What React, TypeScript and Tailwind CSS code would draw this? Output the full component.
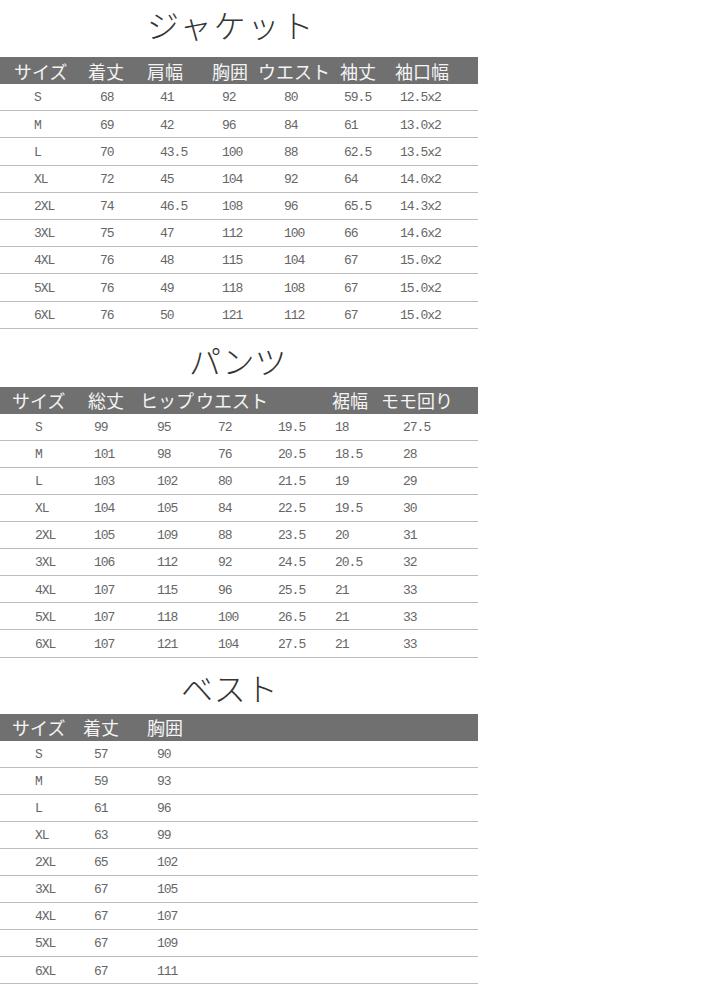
const jp = "font-['Noto_Sans_CJK_JP','Noto_Sans',sans-serif]";
const mono = "font-['Liberation_Mono','DejaVu_Sans_Mono',monospace]";

const sizes = ["S", "M", "L", "XL", "2XL", "3XL", "4XL", "5XL", "6XL"];

const jacketHead = ["サイズ", "着丈", "肩幅", "胸囲", "ウエスト", "袖丈", "袖口幅"];
const jacketRows = [
  ["68", "41", "92", "80", "59.5", "12.5x2"],
  ["69", "42", "96", "84", "61", "13.0x2"],
  ["70", "43.5", "100", "88", "62.5", "13.5x2"],
  ["72", "45", "104", "92", "64", "14.0x2"],
  ["74", "46.5", "108", "96", "65.5", "14.3x2"],
  ["75", "47", "112", "100", "66", "14.6x2"],
  ["76", "48", "115", "104", "67", "15.0x2"],
  ["76", "49", "118", "108", "67", "15.0x2"],
  ["76", "50", "121", "112", "67", "15.0x2"],
];

const pantsHead = ["サイズ", "総丈", "ヒップ", "ウエスト", "裾幅", "モモ回り"];
const pantsRows = [
  ["99", "95", "72", "19.5", "18", "27.5"],
  ["101", "98", "76", "20.5", "18.5", "28"],
  ["103", "102", "80", "21.5", "19", "29"],
  ["104", "105", "84", "22.5", "19.5", "30"],
  ["105", "109", "88", "23.5", "20", "31"],
  ["106", "112", "92", "24.5", "20.5", "32"],
  ["107", "115", "96", "25.5", "21", "33"],
  ["107", "118", "100", "26.5", "21", "33"],
  ["107", "121", "104", "27.5", "21", "33"],
];

const vestHead = ["サイズ", "着丈", "胸囲"];
const vestRows = [
  ["57", "90"],
  ["59", "93"],
  ["61", "96"],
  ["63", "99"],
  ["65", "102"],
  ["67", "105"],
  ["67", "107"],
  ["67", "109"],
  ["67", "111"],
];

type TableProps = {
  title: string;
  titleBox: string;
  titleClass?: string;
  headGrid: string;
  rowGrid: string;
  rowH: string;
  head: string[];
  rows: string[][];
};

function SizeTable({ title, titleBox, titleClass = "", headGrid, rowGrid, rowH, head, rows }: TableProps) {
  return (
    <section className="w-[478px]">
      <div className={`flex items-center ${titleBox}`}>
        <h2 className={`${jp} text-[32px] font-light leading-none text-[#333] ${titleClass}`}>{title}</h2>
      </div>
      <div className={`grid h-[27px] items-center bg-[#707070] ${headGrid}`}>
        {head.map((h) => (
          <span key={h} className={`${jp} text-[18px] leading-none whitespace-nowrap text-[#f4f4f4]`}>
            {h}
          </span>
        ))}
      </div>
      {rows.map((r, i) => (
        <div
          key={sizes[i]}
          className={`grid items-center border-b border-[#bcbcbc] ${rowH} ${rowGrid} ${mono} text-[13px] tracking-[-1px] text-[#666]`}
        >
          <span className="pt-[2px]">{sizes[i]}</span>
          {r.map((v, j) => (
            <span key={j} className="pt-[2px]">{v}</span>
          ))}
        </div>
      ))}
    </section>
  );
}

export default function App() {
  return (
    <div className="w-[718px] min-h-[1000px] bg-white">
      <SizeTable
        title="ジャケット"
        titleBox="h-[57px] pl-[147px] pb-[10px]"
        titleClass="tracking-[2px]"
        headGrid="pl-[14px] grid-cols-[74px_59px_65px_46px_82px_55px_1fr]"
        rowGrid="pl-[34px] grid-cols-[66px_60px_62px_62px_60px_56px_1fr]"
        rowH="h-[27.2px]"
        head={jacketHead}
        rows={jacketRows}
      />
      <SizeTable
        title="パンツ"
        titleBox="h-[58px] pl-[189px] pt-[4px]"
        headGrid="pl-[12px] grid-cols-[76px_52px_56px_136px_49px_1fr]"
        rowGrid="pl-[35px] grid-cols-[59px_63px_61px_60px_57px_68px_1fr]"
        rowH="h-[27.1px]"
        head={pantsHead}
        rows={pantsRows}
      />
      <SizeTable
        title="ベスト"
        titleBox="h-[56px] pl-[181px] pt-[2px]"
        headGrid="pl-[12px] grid-cols-[71px_64px_1fr]"
        rowGrid="pl-[35px] grid-cols-[59px_63px_1fr]"
        rowH="h-[27.1px]"
        head={vestHead}
        rows={vestRows}
      />
    </div>
  );
}
